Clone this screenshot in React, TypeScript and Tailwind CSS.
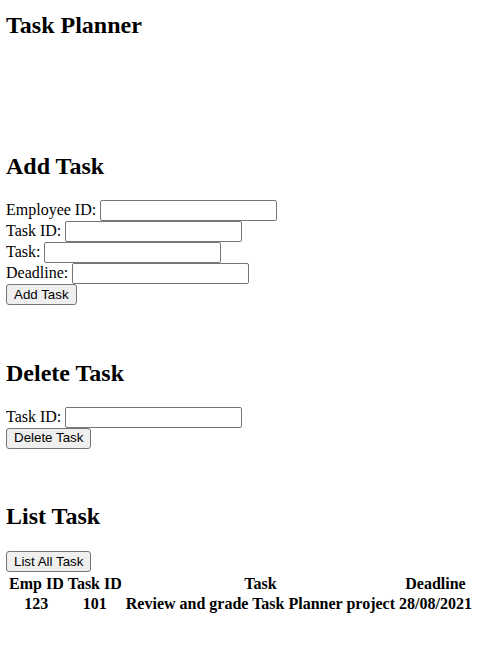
const serif = "font-['Liberation_Serif','Times_New_Roman',serif]";
const sans = "font-['Liberation_Sans',Arial,sans-serif]";

function Field({ label }: { label: string }) {
  return (
    <div className="flex h-[21px] items-center">
      <span>{label}</span>
      <input
        type="text"
        className={`ml-[4px] h-[21px] w-[177px] rounded-[2px] border border-[#767676] bg-white px-[2px] text-[13.33px] ${sans}`}
      />
    </div>
  );
}

function Btn({ children }: { children: string }) {
  return (
    <button
      type="button"
      className={`h-[21px] rounded-[3px] border border-[#767676] bg-[#efefef] px-[7px] text-[13.33px] leading-none text-black ${sans}`}
    >
      {children}
    </button>
  );
}

const tasks = [
  { empId: "123", taskId: "101", task: "Review and grade Task Planner project", deadline: "28/08/2021" },
];

export default function App() {
  return (
    <div className={`min-h-[646px] bg-white px-[6px] text-[16px] leading-[normal] text-black ${serif}`}>
      <div className="h-[11.5px]" />
      <h2 className="text-[24px] font-bold leading-[normal]">Task Planner</h2>

      <h2 className="mt-[114px] text-[24px] font-bold leading-[normal]">Add Task</h2>
      <form className="mt-[20.4px]">
        <Field label="Employee ID:" />
        <Field label="Task ID:" />
        <Field label="Task:" />
        <Field label="Deadline:" />
        <Btn>Add Task</Btn>
      </form>

      <h2 className="mt-[55px] text-[24px] font-bold leading-[normal]">Delete Task</h2>
      <form className="mt-[19.7px]">
        <Field label="Task ID:" />
        <Btn>Delete Task</Btn>
      </form>

      <h2 className="mt-[54px] text-[24px] font-bold leading-[normal]">List Task</h2>
      <div className="mt-[21.4px]">
        <Btn>List All Task</Btn>
      </div>
      <table className="mt-[0.6px] border-separate border-spacing-[2px] font-bold leading-[16px]">
        <thead>
          <tr>
            <th className="p-[1px]">Emp ID</th>
            <th className="p-[1px]">Task ID</th>
            <th className="p-[1px]">Task</th>
            <th className="p-[1px]">Deadline</th>
          </tr>
        </thead>
        <tbody>
          {tasks.map((t) => (
            <tr key={t.taskId}>
              <td className="p-[1px] text-center">{t.empId}</td>
              <td className="p-[1px] text-center">{t.taskId}</td>
              <td className="p-[1px] text-center">{t.task}</td>
              <td className="p-[1px] text-center">{t.deadline}</td>
            </tr>
          ))}
        </tbody>
      </table>
    </div>
  );
}
